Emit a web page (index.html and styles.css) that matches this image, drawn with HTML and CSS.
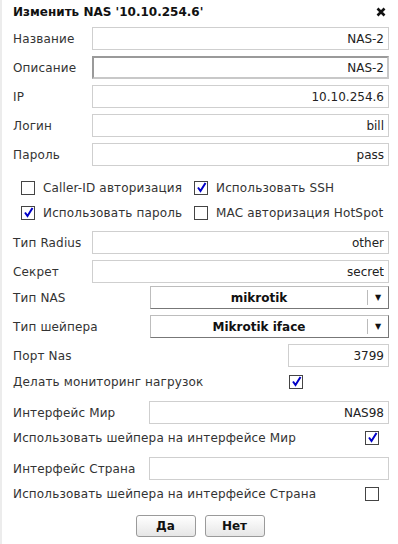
FILE: index.html
```html
<!DOCTYPE html>
<html lang="ru">

<head>
  <meta charset="UTF-8">
  <meta name="viewport" content="width=device-width, initial-scale=1.0">
  <title>Изменить NAS</title>
  <link rel="stylesheet" href="styles.css">
</head>

<body>
  <div class="dialog">
    <div class="title-bar">
      <span class="title">Изменить NAS '10.10.254.6'</span>
      <svg class="close" width="10" height="10" viewBox="0 0 10 10">
        <path d="M1.5 1.5 L8.5 8.5 M8.5 1.5 L1.5 8.5" stroke="#111" stroke-width="2.6" fill="none"/>
      </svg>
    </div>

    <div class="row">
      <label class="lbl">Название</label>
      <input class="field wide" type="text" value="NAS-2">
    </div>
    <div class="row">
      <label class="lbl">Описание</label>
      <input class="field wide focused" type="text" value="NAS-2">
    </div>
    <div class="row">
      <label class="lbl">IP</label>
      <input class="field wide" type="text" value="10.10.254.6">
    </div>
    <div class="row">
      <label class="lbl">Логин</label>
      <input class="field wide" type="text" value="bill">
    </div>
    <div class="row">
      <label class="lbl">Пароль</label>
      <input class="field wide" type="text" value="pass">
    </div>

    <div class="checks">
      <div class="check"><span class="box"></span>Caller-ID авторизация</div>
      <div class="check"><span class="box on"></span>Использовать SSH</div>
      <div class="check"><span class="box on"></span>Использовать пароль</div>
      <div class="check"><span class="box"></span>MAC авторизация HotSpot</div>
    </div>

    <div class="row row-radius">
      <label class="lbl">Тип Radius</label>
      <input class="field wide" type="text" value="other">
    </div>
    <div class="row">
      <label class="lbl">Секрет</label>
      <input class="field wide" type="text" value="secret">
    </div>
    <div class="row row-tight">
      <label class="lbl">Тип NAS</label>
      <div class="select"><span class="select-text">mikrotik</span><span class="arrow">&#9660;</span></div>
    </div>
    <div class="row">
      <label class="lbl">Тип шейпера</label>
      <div class="select"><span class="select-text">Mikrotik iface</span><span class="arrow">&#9660;</span></div>
    </div>
    <div class="row">
      <label class="lbl">Порт Nas</label>
      <input class="field short" type="text" value="3799">
    </div>
    <div class="row row-cb row-monitor">
      <label class="lbl">Делать мониторинг нагрузок</label>
      <span class="cb-cell cb-short"><span class="box on"></span></span>
    </div>
    <div class="row row-after-cb">
      <label class="lbl">Интерфейс Мир</label>
      <input class="field mid" type="text" value="NAS98">
    </div>
    <div class="row row-cb">
      <label class="lbl">Использовать шейпера на интерфейсе Мир</label>
      <span class="cb-cell"><span class="box on"></span></span>
    </div>
    <div class="row row-after-cb">
      <label class="lbl">Интерфейс Страна</label>
      <input class="field mid" type="text" value="">
    </div>
    <div class="row row-cb">
      <label class="lbl">Использовать шейпера на интерфейсе Страна</label>
      <span class="cb-cell"><span class="box"></span></span>
    </div>

    <div class="buttons">
      <button class="btn">Да</button>
      <button class="btn">Нет</button>
    </div>
  </div>
</body>

</html>
```

FILE: styles.css
```css
html,
body {
  margin: 0;
  padding: 0;
  background-color: #fff;
}

body {
  font-family: "DejaVu Sans", Verdana, sans-serif;
  font-size: 12px;
  color: #333;
}

.dialog {
  width: 398px;
  height: 544px;
  box-sizing: border-box;
  border-left: 2px solid #ececec;
  padding: 0 9px 0 11px;
}

.title-bar {
  display: flex;
  justify-content: space-between;
  align-items: center;
  height: 24px;
  padding-top: 0;
}

.title {
  font-weight: bold;
  color: #111;
  font-size: 12px;
}

.close {
  margin-right: 3px;
}

.row {
  display: flex;
  align-items: center;
  height: 23px;
  margin-top: 6px;
}

.title-bar + .row {
  margin-top: 3px;
}

.lbl {
  flex: 1;
  white-space: nowrap;
  letter-spacing: 0.15px;
}

.field {
  box-sizing: border-box;
  height: 23px;
  border: 1px solid #cfcfcf;
  padding: 0 4px;
  font-family: inherit;
  font-size: 12px;
  color: #222;
  text-align: right;
  background: #fff;
  outline: none;
}

.field.focused {
  border: 2px solid #9a9a9a;
  border-right-color: #c8c8c8;
  border-bottom-color: #c8c8c8;
  padding: 0 3px;
}

.wide {
  width: 297px;
}

.mid {
  width: 240px;
}

.short {
  width: 101px;
}

.checks {
  display: grid;
  grid-template-columns: 173px auto;
  row-gap: 12px;
  padding-left: 8px;
  margin-top: 15px;
}

.check {
  display: flex;
  align-items: center;
  height: 13px;
  white-space: nowrap;
  letter-spacing: 0.15px;
}

.check .box {
  margin-right: 8px;
}

.box {
  display: inline-block;
  box-sizing: border-box;
  width: 14px;
  height: 14px;
  border: 1px solid #444;
  background: #fff;
  position: relative;
}

.box.on::after {
  content: "";
  position: absolute;
  left: 2px;
  top: 0;
  width: 10px;
  height: 11px;
  background: url("data:image/svg+xml;utf8,<svg xmlns='http://www.w3.org/2000/svg' width='10' height='11' viewBox='0 0 10 11'><path d='M1 5.5 L3.5 9 L8.5 1' fill='none' stroke='%230000c8' stroke-width='2'/></svg>") no-repeat;
}

.row-radius {
  margin-top: 12px;
}

.row-tight {
  margin-top: 3px;
}

.select {
  box-sizing: border-box;
  width: 239px;
  height: 23px;
  display: flex;
  align-items: center;
  border: 1px solid #bdbdbd;
  border-right-color: #777;
  border-bottom-color: #777;
  background: #fff;
}

.select-text {
  flex: 1;
  text-align: center;
  font-weight: bold;
  color: #111;
}

.arrow {
  width: 20px;
  height: 15px;
  line-height: 15px;
  border-left: 1px solid #bbb;
  text-align: center;
  font-size: 8px;
  color: #111;
}

.row-cb {
  height: 14px;
  margin-top: 7px;
}

.row-monitor {
  margin-top: 8px;
}

.row-after-cb {
  margin-top: 12px;
}

.cb-cell {
  width: 24px;
  display: flex;
}

.cb-short {
  width: 100px;
}

.buttons {
  display: flex;
  justify-content: center;
  gap: 9px;
  margin-top: 14px;
  padding-right: 2px;
}

.btn {
  width: 60px;
  height: 22px;
  border: 1px solid #9a9a9a;
  border-radius: 3px;
  background: linear-gradient(#ffffff, #e6e6e6);
  font-family: inherit;
  font-size: 12px;
  font-weight: bold;
  color: #111;
  padding: 0;
}
```
